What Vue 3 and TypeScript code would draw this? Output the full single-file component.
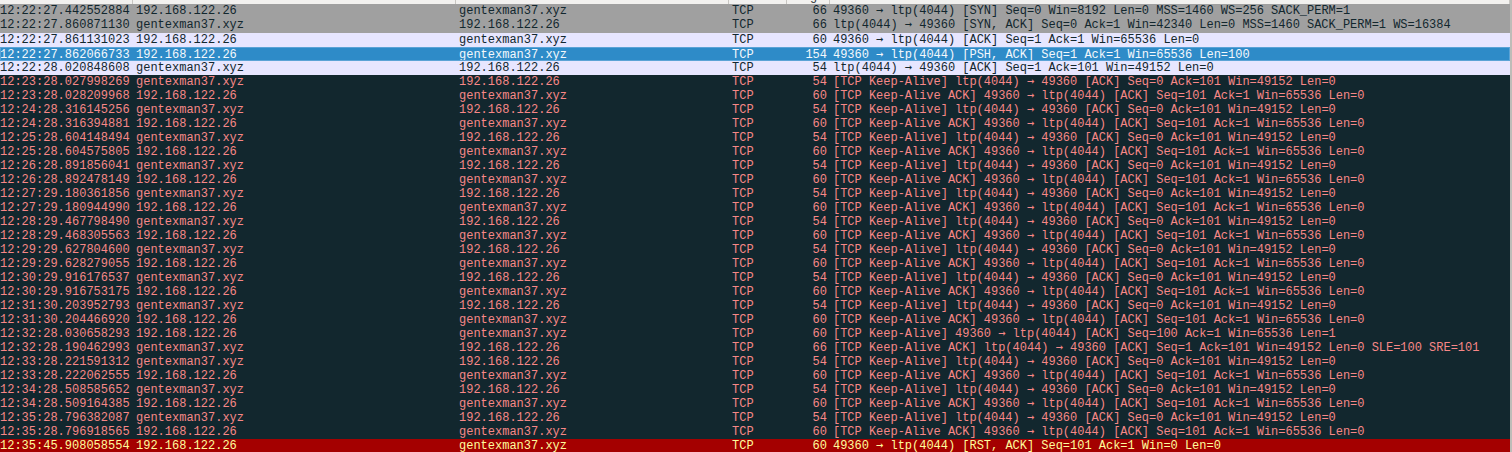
<script setup lang="ts">
interface Packet {
  time: string
  source: string
  destination: string
  length: number
  before: string
  after: string
  kind: string
}

const LOCAL = '192.168.122.26'
const REMOTE = 'gentexman37.xyz'
const PROBE = '[TCP Keep-Alive] ltp(4044) → 49360 [ACK] Seq=0 Ack=101 Win=49152 Len=0'
const REPLY = '[TCP Keep-Alive ACK] 49360 → ltp(4044) [ACK] Seq=101 Ack=1 Win=65536 Len=0'

function packet(time: string, out: boolean, length: number, info: string, kind: string): Packet {
  const [before, after] = info.split('→')
  return {
    time,
    source: out ? LOCAL : REMOTE,
    destination: out ? REMOTE : LOCAL,
    length,
    before,
    after,
    kind,
  }
}

const probe = (time: string) => packet(time, false, 54, PROBE, 'bad')
const reply = (time: string) => packet(time, true, 60, REPLY, 'bad')

const packets: Packet[] = [
  packet('12:22:27.442552884', true, 66, '49360 → ltp(4044) [SYN] Seq=0 Win=8192 Len=0 MSS=1460 WS=256 SACK_PERM=1', 'syn'),
  packet('12:22:27.860871130', false, 66, 'ltp(4044) → 49360 [SYN, ACK] Seq=0 Ack=1 Win=42340 Len=0 MSS=1460 SACK_PERM=1 WS=16384', 'syn'),
  packet('12:22:27.861131023', true, 60, '49360 → ltp(4044) [ACK] Seq=1 Ack=1 Win=65536 Len=0', 'tcp'),
  packet('12:22:27.862066733', true, 154, '49360 → ltp(4044) [PSH, ACK] Seq=1 Ack=1 Win=65536 Len=100', 'selected'),
  packet('12:22:28.020848608', false, 54, 'ltp(4044) → 49360 [ACK] Seq=1 Ack=101 Win=49152 Len=0', 'tcp'),
  probe('12:23:28.027998269'), reply('12:23:28.028209968'),
  probe('12:24:28.316145256'), reply('12:24:28.316394881'),
  probe('12:25:28.604148494'), reply('12:25:28.604575805'),
  probe('12:26:28.891856041'), reply('12:26:28.892478149'),
  probe('12:27:29.180361856'), reply('12:27:29.180944990'),
  probe('12:28:29.467798490'), reply('12:28:29.468305563'),
  probe('12:29:29.627804600'), reply('12:29:29.628279055'),
  probe('12:30:29.916176537'), reply('12:30:29.916753175'),
  probe('12:31:30.203952793'), reply('12:31:30.204466920'),
  packet('12:32:28.030658293', true, 60, '[TCP Keep-Alive] 49360 → ltp(4044) [ACK] Seq=100 Ack=1 Win=65536 Len=1', 'bad'),
  packet('12:32:28.190462993', false, 66, '[TCP Keep-Alive ACK] ltp(4044) → 49360 [ACK] Seq=1 Ack=101 Win=49152 Len=0 SLE=100 SRE=101', 'bad'),
  probe('12:33:28.221591312'), reply('12:33:28.222062555'),
  probe('12:34:28.508585652'), reply('12:34:28.509164385'),
  probe('12:35:28.796382087'), reply('12:35:28.796918565'),
  packet('12:35:45.908058554', true, 60, '49360 → ltp(4044) [RST, ACK] Seq=101 Ack=1 Win=0 Len=0', 'rst'),
]
</script>

<template>
  <div class="window">
    <div class="list">
      <div class="header">
        <span class="h time"></span>
        <span class="h source"></span>
        <span class="h dest"></span>
        <span class="h proto"></span>
        <span class="h len"><b>Length</b></span>
        <span class="h info"></span>
      </div>
      <div v-for="p in packets" :key="p.time" class="row" :class="p.kind">
        <span class="time">{{ p.time }}</span>
        <span class="source">{{ p.source }}</span>
        <span class="dest">{{ p.destination }}</span>
        <span class="proto">TCP</span>
        <span class="len">{{ p.length }}</span>
        <span class="info">{{ p.before }}<i class="arrow">→</i>{{ p.after }}</span>
      </div>
    </div>
    <div class="scroll"></div>
  </div>
</template>

<style>
html, body { margin: 0; background: #12272e; overflow: hidden; }
</style>

<style scoped>
.window {
  display: flex;
  width: 1512px;
  height: 452px;
  overflow: hidden;
  background: #12272e;
}
.list { flex: 1; min-width: 0; }
.scroll { width: 2px; background: #bdbcb8; }
.header {
  display: grid;
  grid-template-columns: 133px 323px 273px 58px 43px 1fr;
  height: 4px;
  overflow: hidden;
  background: #f2f1ef;
}
.h { border-right: 1px solid #c8c6c2; box-sizing: border-box; height: 4px; position: relative; }
.h b {
  position: absolute;
  right: 2px;
  bottom: 1px;
  font: 400 12px/14px "Liberation Sans", sans-serif;
  color: #2e3436;
}
.row {
  display: grid;
  grid-template-columns: 136px 323px 273px 58px 37px 1fr;
  height: 14px;
  font: 12px/14px "Liberation Mono", monospace;
  white-space: pre;
  box-sizing: border-box;
}
.row:nth-child(3) { height: 15px; }
.len { text-align: right; }
.row .info { padding-left: 6px; letter-spacing: -0.02px; }
.arrow {
  font: 12px/0 "DejaVu Sans Mono", monospace;
  letter-spacing: 0;
}
.syn { background: #a0a0a0; color: #12272e; }
.tcp { background: #e7e6ff; color: #12272e; }
.selected {
  background: #2e8bc8;
  color: #f4f8fc;
  padding-top: 1px;
  outline: 1px solid #5ba3d6;
  outline-offset: -1px;
}
.bad { background: #12272e; color: #f78787; }
.rst { background: #a40000; color: #fffc9c; }
</style>
